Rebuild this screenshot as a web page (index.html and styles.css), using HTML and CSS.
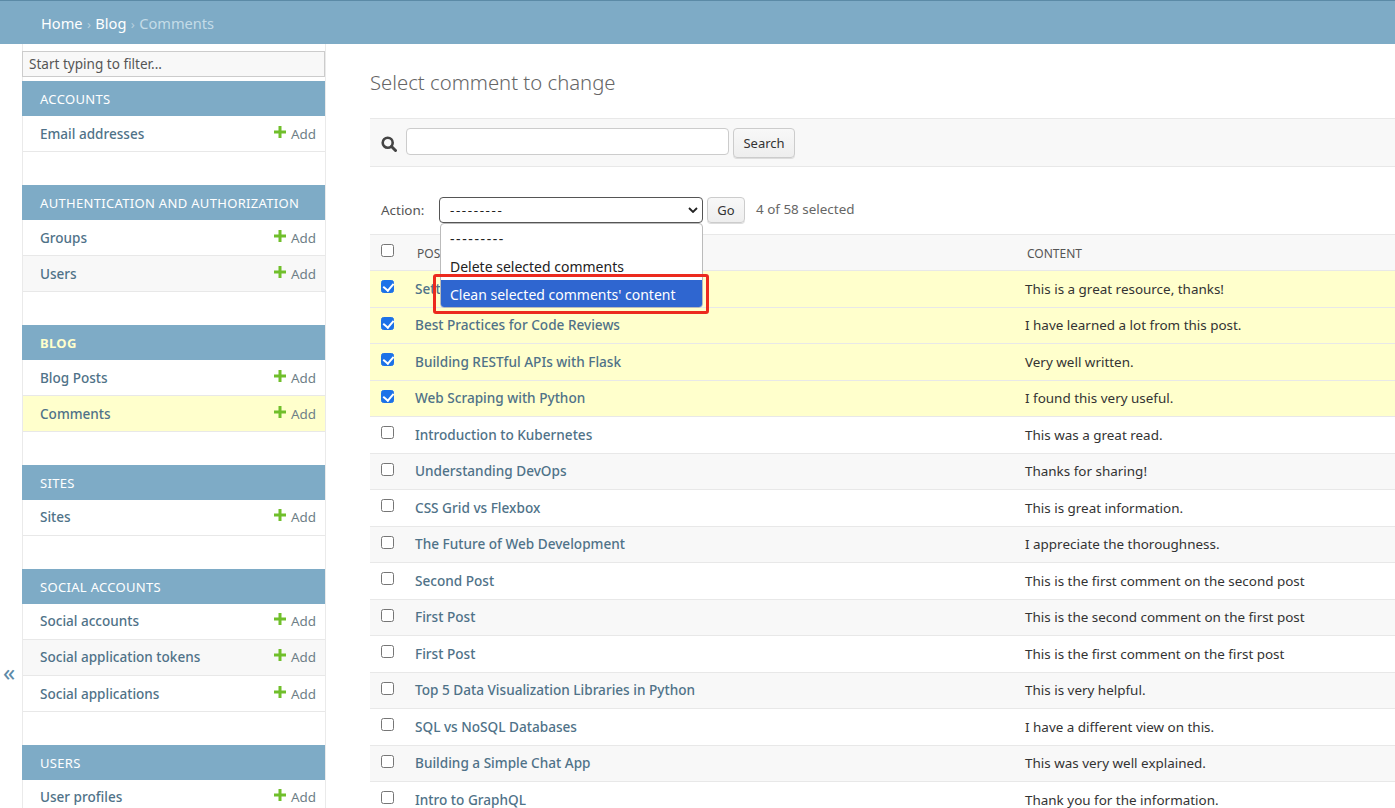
FILE: index.html
```html
<!DOCTYPE html>
<html lang="en">
<head>
<meta charset="utf-8">
<title>Select comment to change</title>
<link rel="stylesheet" href="styles.css">
</head>
<body>
<header class="crumbs"><a>Home</a> <span class="sep">›</span> <a>Blog</a> <span class="sep">›</span> <span class="cur">Comments</span></header>
<div class="page">
  <div class="toggle">«</div>
  <aside class="side">
    <input class="filter" placeholder="Start typing to filter...">
    <section class="app"><h2>ACCOUNTS</h2>
      <div class="mrow"><a>Email addresses</a><span class="add"><svg viewBox="0 0 12 12"><path d="M4.500 0h3v4.500h4.500v3h-4.500v4.500h-3v-4.500h-4.500v-3h4.500z"/></svg>Add</span></div>
    </section>
    <section class="app"><h2>AUTHENTICATION AND AUTHORIZATION</h2>
      <div class="mrow"><a>Groups</a><span class="add"><svg viewBox="0 0 12 12"><path d="M4.500 0h3v4.500h4.500v3h-4.500v4.500h-3v-4.500h-4.500v-3h4.500z"/></svg>Add</span></div>
      <div class="mrow"><a>Users</a><span class="add"><svg viewBox="0 0 12 12"><path d="M4.500 0h3v4.500h4.500v3h-4.500v4.500h-3v-4.500h-4.500v-3h4.500z"/></svg>Add</span></div>
    </section>
    <section class="app"><h2 class="active">BLOG</h2>
      <div class="mrow"><a>Blog Posts</a><span class="add"><svg viewBox="0 0 12 12"><path d="M4.500 0h3v4.500h4.500v3h-4.500v4.500h-3v-4.500h-4.500v-3h4.500z"/></svg>Add</span></div>
      <div class="mrow on"><a>Comments</a><span class="add"><svg viewBox="0 0 12 12"><path d="M4.500 0h3v4.500h4.500v3h-4.500v4.500h-3v-4.500h-4.500v-3h4.500z"/></svg>Add</span></div>
    </section>
    <section class="app"><h2>SITES</h2>
      <div class="mrow lift"><a>Sites</a><span class="add"><svg viewBox="0 0 12 12"><path d="M4.500 0h3v4.500h4.500v3h-4.500v4.500h-3v-4.500h-4.500v-3h4.500z"/></svg>Add</span></div>
    </section>
    <section class="app"><h2>SOCIAL ACCOUNTS</h2>
      <div class="mrow lift"><a>Social accounts</a><span class="add"><svg viewBox="0 0 12 12"><path d="M4.500 0h3v4.500h4.500v3h-4.500v4.500h-3v-4.500h-4.500v-3h4.500z"/></svg>Add</span></div>
      <div class="mrow lift"><a>Social application tokens</a><span class="add"><svg viewBox="0 0 12 12"><path d="M4.500 0h3v4.500h4.500v3h-4.500v4.500h-3v-4.500h-4.500v-3h4.500z"/></svg>Add</span></div>
      <div class="mrow"><a>Social applications</a><span class="add"><svg viewBox="0 0 12 12"><path d="M4.500 0h3v4.500h4.500v3h-4.500v4.500h-3v-4.500h-4.500v-3h4.500z"/></svg>Add</span></div>
    </section>
    <section class="app"><h2>USERS</h2>
      <div class="mrow lift"><a>User profiles</a><span class="add"><svg viewBox="0 0 12 12"><path d="M4.500 0h3v4.500h4.500v3h-4.500v4.500h-3v-4.500h-4.500v-3h4.500z"/></svg>Add</span></div>
    </section>
  </aside>
  <main class="main">
    <h1>Select comment to change</h1>
    <div class="search">
      <svg class="mag" viewBox="0 0 16 16"><circle cx="6.700" cy="6.700" r="5" fill="none" stroke="#444" stroke-width="2.600"/><path d="M10.500 10.500l4 4" stroke="#444" stroke-width="3" stroke-linecap="round"/></svg>
      <input class="q"><button class="btn sbtn">Search</button>
    </div>
    <div class="actions">
      <label class="lbl">Action:</label>
      <div class="selwrap">
        <div class="sel"><span class="dash">---------</span><svg viewBox="0 0 10 6"><path d="M1 1l4 4 4-4" fill="none" stroke="#222" stroke-width="1.800"/></svg></div>
        <div class="menu">
          <div class="opt"><span class="dash">---------</span></div>
          <div class="opt">Delete selected comments</div>
          <div class="opt hi">Clean selected comments' content</div>
        </div>
        <div class="redbox"></div>
      </div>
      <button class="btn gobtn">Go</button>
      <span class="count">4 of 58 selected</span>
    </div>
    <table class="list">
      <colgroup><col class="c1"><col class="c2"><col class="c3"></colgroup>
      <thead><tr><th><span class="box headbox"></span></th><th class="t1">POST</th><th class="t2">CONTENT</th></tr></thead>
      <tbody>
        <tr class="sel-row"><td><span class="box ck"></span></td><td><a>Setting up a Django Project</a></td><td>This is a great resource, thanks!</td></tr>
        <tr class="sel-row"><td><span class="box ck"></span></td><td><a>Best Practices for Code Reviews</a></td><td>I have learned a lot from this post.</td></tr>
        <tr class="sel-row"><td><span class="box ck"></span></td><td><a>Building RESTful APIs with Flask</a></td><td>Very well written.</td></tr>
        <tr class="sel-row"><td><span class="box ck"></span></td><td><a>Web Scraping with Python</a></td><td>I found this very useful.</td></tr>
        <tr><td><span class="box"></span></td><td><a>Introduction to Kubernetes</a></td><td>This was a great read.</td></tr>
        <tr><td><span class="box"></span></td><td><a>Understanding DevOps</a></td><td>Thanks for sharing!</td></tr>
        <tr><td><span class="box"></span></td><td><a>CSS Grid vs Flexbox</a></td><td>This is great information.</td></tr>
        <tr><td><span class="box"></span></td><td><a>The Future of Web Development</a></td><td>I appreciate the thoroughness.</td></tr>
        <tr><td><span class="box"></span></td><td><a>Second Post</a></td><td>This is the first comment on the second post</td></tr>
        <tr><td><span class="box"></span></td><td><a>First Post</a></td><td>This is the second comment on the first post</td></tr>
        <tr><td><span class="box"></span></td><td><a>First Post</a></td><td>This is the first comment on the first post</td></tr>
        <tr><td><span class="box"></span></td><td><a>Top 5 Data Visualization Libraries in Python</a></td><td>This is very helpful.</td></tr>
        <tr><td><span class="box"></span></td><td><a>SQL vs NoSQL Databases</a></td><td>I have a different view on this.</td></tr>
        <tr><td><span class="box"></span></td><td><a>Building a Simple Chat App</a></td><td>This was very well explained.</td></tr>
        <tr><td><span class="box"></span></td><td><a>Intro to GraphQL</a></td><td>Thank you for the information.</td></tr>
      </tbody>
    </table>
  </main>
</div>
</body>
</html>
```
FILE: styles.css
```css
* { box-sizing: border-box; }
html, body { margin: 0; height: 808px; overflow: hidden; background: #fff; }
body { font: 13.45px/16px "Noto Sans", "Open Sans", sans-serif; color: #333; }
.crumbs { height: 44px; background: #7eabc6; border-top: 1px solid #5b8aa6; padding: 13px 0 0 41px; font-size: 14.6px; line-height: 18px; color: #fff; }
.sep { color: #b6cfde; font-size: 13px; margin: 0 .6px; }
.cur { color: #c4dce8; }
.page { display: flex; height: 764px; position: relative; overflow: hidden; }
.toggle { position: absolute; left: 3px; top: 616px; font-size: 24px; line-height: 24px; color: #5d8aa8; }
.side { width: 304px; margin-left: 22px; flex: none; border-left: 1px solid #eaeaea; border-right: 1px solid #eaeaea; padding-top: 7px; }
.filter { display: block; width: 303px; margin-left: -1px; height: 26px; border: 1px solid #ccc; background: #f8f8f8; padding: 0 6px; font: 13.55px "Noto Sans", sans-serif; border-radius: 0; }
.filter::placeholder { color: #555; }
.app { margin: 4px 0 33px -1px; }
.app + .app { margin-top: 0; }
.app h2 { margin: 0; height: 35px; background: #7eabc6; color: #fff; font-size: 13px; font-weight: 400; line-height: 36px; padding-left: 18px; letter-spacing: .32px; }
.app h2.active { font-weight: 700; color: #ffffcc; }
.mrow { height: 36px; display: flex; align-items: center; justify-content: space-between; border-bottom: 1px solid #e8e8e8; margin-left: 1px; padding: 0 9px 0 17px; }
.mrow.lift { padding-bottom: 2px; }
.mrow:nth-of-type(even) { background: #f8f8f8; }
.mrow.on { background: #ffffcc; }
.mrow a { color: #4f7288; font-weight: 550; font-size: 13.55px; }
.add { color: #6f7f88; display: flex; align-items: center; }
.add svg { width: 12px; height: 12px; fill: #70bf2b; margin-right: 5px; margin-top: -3px; }
.main { flex: none; width: 1200px; margin-left: 44px; }
h1 { margin: 0; padding-top: 25px; height: 74px; font-size: 20.3px; line-height: 26px; font-weight: 300; color: #666; }
.search { height: 49px; background: #f8f8f8; border-top: 1px solid #e8e8e8; border-bottom: 1px solid #e8e8e8; display: flex; align-items: center; padding-left: 11px; }
.mag { width: 16px; height: 16px; margin-right: 9px; margin-top: 2px; }
.q { width: 323px; height: 27px; border: 1px solid #ccc; border-radius: 4px; background: #fff; margin-top: -2px; }
.btn { border: 1px solid #ccc; border-radius: 4px; background: linear-gradient(#f8f8f8, #eee); font: 13px "Noto Sans", sans-serif; color: #333; padding: 0; box-shadow: 0 1px 0 #ddd; }
.sbtn { width: 62px; height: 30px; margin-left: 4px; }
.actions { height: 67px; display: flex; align-items: flex-start; padding-top: 30px; color: #666; position: relative; }
.lbl { width: 69px; padding-left: 11px; line-height: 26px; color: #555; }
.selwrap { width: 264px; position: relative; }
.sel { height: 26px; border: 1px solid #555; border-radius: 4px; background: #fff; color: #222; padding-left: 10px; line-height: 26px; display: flex; justify-content: space-between; align-items: center; padding-right: 4px; }
.sel svg { width: 10px; height: 6px; }
.dash { letter-spacing: 1.6px; }
.menu { position: absolute; left: 1px; top: 26px; width: 263px; height: 85px; background: #fff; border: 1px solid #bbb; border-radius: 4px; overflow: hidden; z-index: 3; }
.opt { height: 28px; line-height: 30px; padding-left: 9px; font-size: 14px; color: #222; }
.opt.hi { background: #2f66d0; color: #fff; }
.redbox { position: absolute; left: -6px; top: 77px; width: 276px; height: 40px; border: 3px solid #ec2a1e; border-radius: 3px; z-index: 4; }
.gobtn { width: 38px; height: 26px; margin-left: 4px; }
.count { margin-left: 11px; line-height: 24px; color: #666; }
.list { width: 1200px; border-collapse: separate; border-spacing: 0; table-layout: fixed; }
.c1 { width: 45px; } .c2 { width: 610px; }
.list th { height: 36px; background: #f8f8f8; border-top: 1px solid #e8e8e8; font-size: 12px; line-height: 18px; font-weight: 400; color: #555; text-align: left; padding: 3px 0 0; }
.list th.t1, .list th.t2 { padding-left: 2px; }
.list td { height: 36.5px; padding: 0; border-top: 1px solid #e8e8e8; color: #333; }
.list a { color: #4f7288; font-weight: 550; font-size: 13.6px; }
.list tbody tr:nth-child(even) { background: #f8f8f8; }
.list tbody tr.sel-row { background: #ffffcc; }
.box { display: block; width: 13px; height: 13px; margin: -4px 0 0 11px; border: 1px solid #767676; border-radius: 2.500px; background: #fff; position: relative; }
.box.headbox { margin-top: -8px; }
.box.ck { background: #1c72e8; border-color: #1c72e8; }
.box.ck::after { content: ""; position: absolute; left: 3px; top: 0; width: 5px; height: 8px; border: solid #fff; border-width: 0 2px 2px 0; transform: rotate(40deg); }
```
